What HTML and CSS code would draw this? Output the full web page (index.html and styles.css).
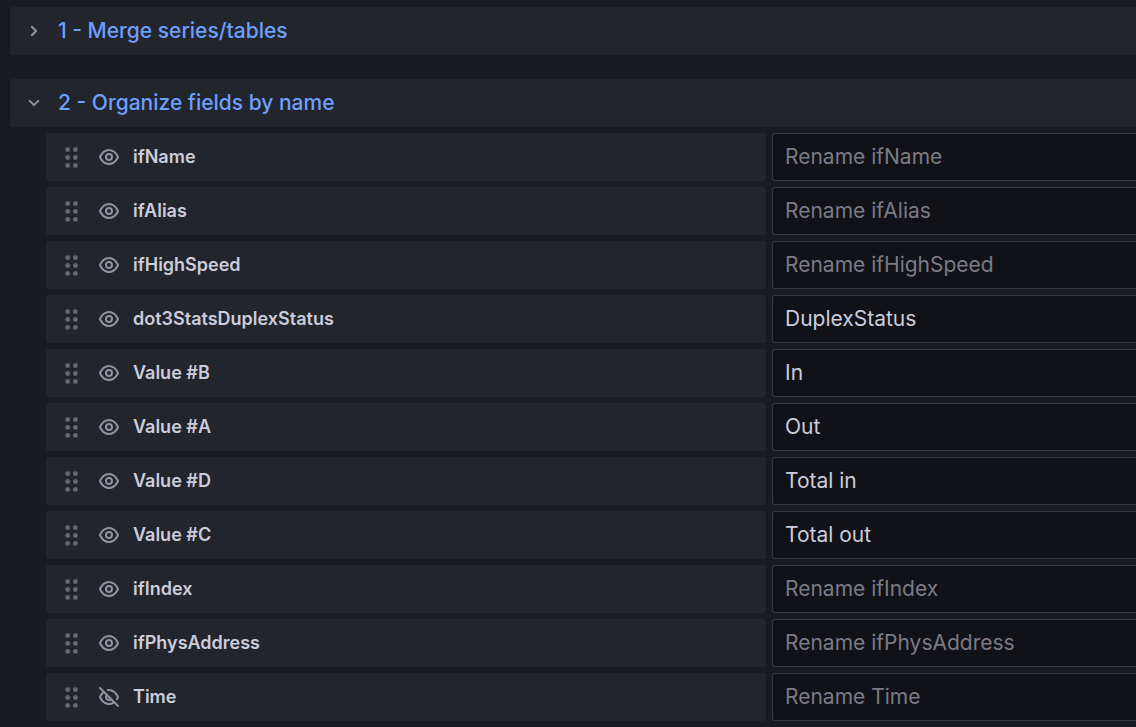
FILE: index.html
```html
<!DOCTYPE html>
<html lang="en">
<head>
<meta charset="utf-8">
<title>Transformations</title>
<meta name="viewport" content="width=device-width, initial-scale=1">
<link rel="stylesheet" href="styles.css">
</head>
<body>
<svg class="sprite" aria-hidden="true">
  <symbol id="angle-right" viewBox="0 0 24 24"><path d="M14.83,11.29,10.59,7.05a1,1,0,0,0-1.42,0,1,1,0,0,0,0,1.41L12.71,12,9.17,15.54a1,1,0,0,0,0,1.41,1,1,0,0,0,.71.29,1,1,0,0,0,.71-.29l4.24-4.24A1,1,0,0,0,14.83,11.29Z"/></symbol>
  <symbol id="angle-down" viewBox="0 0 24 24"><path d="M17,9.17a1,1,0,0,0-1.41,0L12,12.71,8.46,9.17a1,1,0,0,0-1.41,0,1,1,0,0,0,0,1.42l4.24,4.24a1,1,0,0,0,1.42,0L17,10.59A1,1,0,0,0,17,9.17Z"/></symbol>
  <symbol id="dots" viewBox="0 0 24 24"><circle cx="6.7" cy="4.7" r="2.4"/><circle cx="14.4" cy="4.7" r="2.4"/><circle cx="6.7" cy="12.5" r="2.4"/><circle cx="14.4" cy="12.5" r="2.4"/><circle cx="6.7" cy="20.4" r="2.4"/><circle cx="14.4" cy="20.4" r="2.4"/></symbol>
  <symbol id="eye" viewBox="0 0 24 24"><path d="M21.92,11.6C19.9,6.91,16.1,4,12,4S4.1,6.91,2.08,11.6a1,1,0,0,0,0,.8C4.1,17.09,7.9,20,12,20s7.9-2.91,9.92-7.6A1,1,0,0,0,21.92,11.6ZM12,18c-3.17,0-6.17-2.29-7.9-6C5.83,8.29,8.83,6,12,6s6.17,2.29,7.9,6C18.17,15.71,15.17,18,12,18ZM12,8a4,4,0,1,0,4,4A4,4,0,0,0,12,8Zm0,6a2,2,0,1,1,2-2A2,2,0,0,1,12,14Z"/></symbol>
  <symbol id="eye-slash" viewBox="0 0 24 24"><path d="M10.94,6.08A6.93,6.93,0,0,1,12,6c3.18,0,6.17,2.29,7.91,6a15.23,15.23,0,0,1-.9,1.64,1,1,0,0,0-.16.55,1,1,0,0,0,1.86.5,15.77,15.77,0,0,0,1.21-2.3,1,1,0,0,0,0-.79C19.9,6.91,16.1,4,12,4a7.77,7.77,0,0,0-1.4.12,1,1,0,1,0,.34,2ZM3.71,2.29A1,1,0,0,0,2.29,3.71L5.39,6.8a14.62,14.62,0,0,0-3.31,4.8,1,1,0,0,0,0,.8C4.1,17.09,7.9,20,12,20a9.26,9.26,0,0,0,5.05-1.54l3.24,3.25a1,1,0,0,0,1.42,0,1,1,0,0,0,0-1.42Zm6.36,9.19,2.45,2.45A1.81,1.81,0,0,1,12,14a2,2,0,0,1-2-2A1.81,1.81,0,0,1,10.07,11.48ZM12,18c-3.18,0-6.17-2.29-7.9-6A12.09,12.09,0,0,1,6.8,8.21L8.57,10A4,4,0,0,0,14,15.43L15.59,17A7.24,7.24,0,0,1,12,18Z"/></symbol>
</svg>
<main class="transformations">
  <section class="step">
    <button class="step-header" type="button" aria-expanded="false"><svg class="icon"><use href="#angle-right"/></svg><span>1 - Merge series/tables</span></button>
  </section>
  <section class="step">
    <button class="step-header" type="button" aria-expanded="true"><svg class="icon"><use href="#angle-down"/></svg><span>2 - Organize fields by name</span></button>
    <div class="fields">
      <div class="field"><div class="field-name"><svg class="icon handle"><use href="#dots"/></svg><button class="toggle" type="button" aria-label="Hide ifName"><svg class="icon"><use href="#eye"/></svg></button><label for="f1">ifName</label></div><input class="rename" id="f1" type="text" placeholder="Rename ifName"></div>
      <div class="field"><div class="field-name"><svg class="icon handle"><use href="#dots"/></svg><button class="toggle" type="button" aria-label="Hide ifAlias"><svg class="icon"><use href="#eye"/></svg></button><label for="f2">ifAlias</label></div><input class="rename" id="f2" type="text" placeholder="Rename ifAlias"></div>
      <div class="field"><div class="field-name"><svg class="icon handle"><use href="#dots"/></svg><button class="toggle" type="button" aria-label="Hide ifHighSpeed"><svg class="icon"><use href="#eye"/></svg></button><label for="f3">ifHighSpeed</label></div><input class="rename" id="f3" type="text" placeholder="Rename ifHighSpeed"></div>
      <div class="field"><div class="field-name"><svg class="icon handle"><use href="#dots"/></svg><button class="toggle" type="button" aria-label="Hide dot3StatsDuplexStatus"><svg class="icon"><use href="#eye"/></svg></button><label for="f4">dot3StatsDuplexStatus</label></div><input class="rename" id="f4" type="text" value="DuplexStatus"></div>
      <div class="field"><div class="field-name"><svg class="icon handle"><use href="#dots"/></svg><button class="toggle" type="button" aria-label="Hide Value #B"><svg class="icon"><use href="#eye"/></svg></button><label for="f5">Value #B</label></div><input class="rename" id="f5" type="text" value="In"></div>
      <div class="field"><div class="field-name"><svg class="icon handle"><use href="#dots"/></svg><button class="toggle" type="button" aria-label="Hide Value #A"><svg class="icon"><use href="#eye"/></svg></button><label for="f6">Value #A</label></div><input class="rename" id="f6" type="text" value="Out"></div>
      <div class="field"><div class="field-name"><svg class="icon handle"><use href="#dots"/></svg><button class="toggle" type="button" aria-label="Hide Value #D"><svg class="icon"><use href="#eye"/></svg></button><label for="f7">Value #D</label></div><input class="rename" id="f7" type="text" value="Total in"></div>
      <div class="field"><div class="field-name"><svg class="icon handle"><use href="#dots"/></svg><button class="toggle" type="button" aria-label="Hide Value #C"><svg class="icon"><use href="#eye"/></svg></button><label for="f8">Value #C</label></div><input class="rename" id="f8" type="text" value="Total out"></div>
      <div class="field"><div class="field-name"><svg class="icon handle"><use href="#dots"/></svg><button class="toggle" type="button" aria-label="Hide ifIndex"><svg class="icon"><use href="#eye"/></svg></button><label for="f9">ifIndex</label></div><input class="rename" id="f9" type="text" placeholder="Rename ifIndex"></div>
      <div class="field"><div class="field-name"><svg class="icon handle"><use href="#dots"/></svg><button class="toggle" type="button" aria-label="Hide ifPhysAddress"><svg class="icon"><use href="#eye"/></svg></button><label for="f10">ifPhysAddress</label></div><input class="rename" id="f10" type="text" placeholder="Rename ifPhysAddress"></div>
      <div class="field"><div class="field-name"><svg class="icon handle"><use href="#dots"/></svg><button class="toggle" type="button" aria-label="Show Time"><svg class="icon"><use href="#eye-slash"/></svg></button><label for="f11">Time</label></div><input class="rename" id="f11" type="text" placeholder="Rename Time"></div>
    </div>
  </section>
</main>
</body>
</html>
```
FILE: styles.css
```css
* {
  box-sizing: border-box;
}

body {
  margin: 0;
  background: #181b1f;
  color: #ccccdc;
  font-family: Inter, "Liberation Sans", sans-serif;
}

.sprite {
  display: none;
}

.icon {
  display: block;
  flex: none;
  width: 24px;
  height: 24px;
  fill: #91929e;
}

.transformations {
  display: flex;
  flex-direction: column;
  gap: 24px;
  padding: 7px 0 6px 10px;
}

.step-header {
  display: flex;
  align-items: center;
  gap: 12px;
  width: 100%;
  min-height: 48px;
  padding: 0 12px;
  border: 0;
  border-radius: 3px 0 0 3px;
  background: #22252b;
  color: #6e9fff;
  font: 500 21px/30px Inter, "Liberation Sans", sans-serif;
  text-align: left;
}

.fields {
  display: flex;
  flex-direction: column;
  gap: 6px;
  padding: 6px 0 0 36px;
}

.field {
  display: grid;
  grid-template-columns: minmax(0, 180fr) minmax(0, 91fr);
  gap: 6px;
}

.field-name {
  display: flex;
  align-items: center;
  gap: 12px;
  min-height: 48px;
  padding: 0 15px;
  border-radius: 3px;
  background: #22252b;
  font-size: 18px;
  font-weight: 600;
  line-height: 24px;
}

.handle {
  fill: #676972;
}

.toggle {
  padding: 0;
  border: 0;
  background: none;
}

.rename {
  width: 100%;
  min-width: 0;
  padding: 0 12px;
  border: 1px solid #37383e;
  border-right: 0;
  border-radius: 3px 0 0 3px;
  background: #111217;
  color: #ccccdc;
  font: 400 21px/30px Inter, "Liberation Sans", sans-serif;
}

.rename::placeholder {
  color: #7b7b86;
  opacity: 1;
}
```
